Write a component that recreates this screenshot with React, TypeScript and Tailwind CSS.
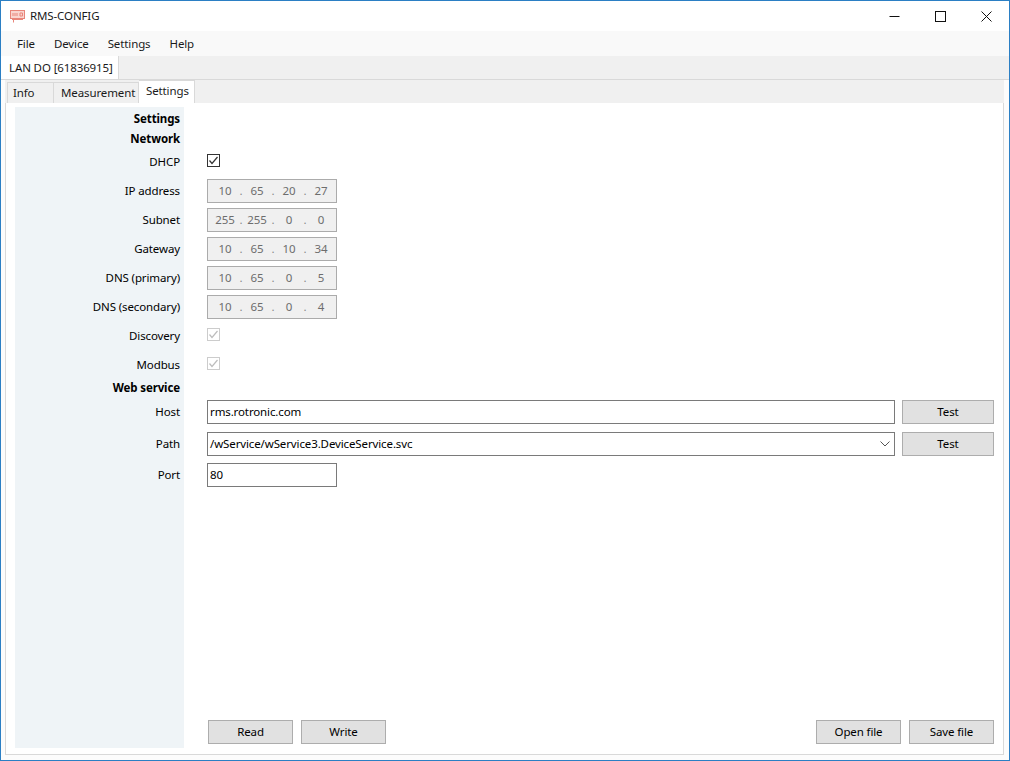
const ipRows = [
  { label: "IP address", parts: ["10", "65", "20", "27"] },
  { label: "Subnet", parts: ["255", "255", "0", "0"] },
  { label: "Gateway", parts: ["10", "65", "10", "34"] },
  { label: "DNS (primary)", parts: ["10", "65", "0", "5"] },
  { label: "DNS (secondary)", parts: ["10", "65", "0", "4"] },
]

function Check({ disabled = false, lift }: { disabled?: boolean; lift: string }) {
  return (
    <svg width="13" height="13" viewBox="0 0 13 13" className={`block ${lift}`}>
      <rect x="0.5" y="0.5" width="12" height="12" fill="#fff" stroke={disabled ? "#cccccc" : "#333333"} />
      <path d="M2.5 6.5 L5 9.5 L10.5 3" fill="none" stroke={disabled ? "#bdbdbd" : "#333333"} strokeWidth="1.2" />
    </svg>
  )
}

function Row({ label, bold, h, children }: { label: string; bold?: boolean; h: string; children?: React.ReactNode }) {
  return (
    <div className={`flex items-center ${h}`}>
      <div className={`w-[169px] h-full bg-[#eff4f7] flex items-center justify-end pr-[4px] text-black ${bold ? "font-bold" : ""}`}>
        {label}
      </div>
      <div className="flex-1 pl-[23px] pr-[8px] flex items-center gap-[7px]">{children}</div>
    </div>
  )
}

function Btn({ children, w }: { children: string; w: string }) {
  return (
    <div className={`${w} h-[24px] bg-[#e1e1e1] border border-[#adadad] flex items-center justify-center text-black`}>
      {children}
    </div>
  )
}

function IpBox({ parts }: { parts: string[] }) {
  return (
    <div className="w-[130px] h-[24px] bg-[#f0f0f0] border border-[#ababab] pl-[4px] grid grid-cols-[26px_6px_26px_6px_26px_6px_26px] items-center text-[#6d6d6d]">
      {parts.map((p, i) => (
        <div key={i} className="contents">
          <span className="text-center">{p}</span>
          {i < 3 && <span className="text-center text-[#8a8a8a]">.</span>}
        </div>
      ))}
    </div>
  )
}

export default function App() {
  return (
    <div className="w-[1010px] h-[761px] bg-white border border-[#2b7fc4] flex flex-col overflow-hidden text-[11.5px] tracking-[-0.12px] text-[#1a1a1a] font-['Noto_Sans','Open_Sans',sans-serif]">
      <div className="h-[30px] flex items-center shrink-0">
        <svg width="15" height="13" viewBox="0 0 15 13" className="ml-[9px] mr-[5px]" fill="none" stroke="#e8857a">
          <rect x="0.5" y="0.5" width="14" height="8" fill="#f9d5d0" />
          <path d="M3 3v3M5 3v3M7 3v3M10 3h2.5v3H10z" />
          <path d="M2 9.5h11M3.5 10v2.5" />
        </svg>
        <span>RMS-CONFIG</span>
        <div className="ml-auto flex items-center">
          <svg width="11" height="11" viewBox="0 0 11 11" className="mr-[35px]" stroke="#111" fill="none">
            <path d="M0.5 5.5h10" />
          </svg>
          <svg width="11" height="11" viewBox="0 0 11 11" className="mr-[35px]" stroke="#111" fill="none">
            <rect x="0.5" y="0.5" width="10" height="10" />
          </svg>
          <svg width="11" height="11" viewBox="0 0 11 11" className="mr-[17px]" stroke="#111" fill="none">
            <path d="M0.5 0.5l10 10M10.5 0.5l-10 10" />
          </svg>
        </div>
      </div>

      <div className="h-[25px] bg-[#f9f9f9] flex items-center pl-[16px] gap-[19px] shrink-0">
        <span>File</span>
        <span>Device</span>
        <span>Settings</span>
        <span>Help</span>
      </div>

      <div className="h-[23px] bg-[#f0f0f0] shrink-0 flex items-end">
        <div className="w-[118px] h-[23px] bg-white border-r border-[#d9d9d9] pl-[8px] flex items-center whitespace-nowrap">LAN DO [61836915]</div>
      </div>

      <div className="flex-1 min-h-0 border-t border-[#d9d9d9] pl-[4px] pr-[5px] pb-[5px] flex flex-col bg-[#fcfcfc]">
        <div className="h-[23px] bg-[#f0f0f0] flex items-end shrink-0 pl-[2px]">
          <div className="w-[47px] h-[21px] border border-b-0 border-[#d9d9d9] flex items-center pl-[5px]">Info</div>
          <div className="w-[85px] h-[21px] border-r border-t border-[#d9d9d9] flex items-center pl-[7px] whitespace-nowrap">Measurement</div>
          <div className="w-[56px] h-[23px] bg-white border-r border-t border-[#d9d9d9] flex items-center pl-[7px] pb-[2px]">Settings</div>
        </div>
        <div className="flex-1 min-h-0 bg-white border border-t-0 border-[#d9d9d9] pl-[9px] pt-[4px] pb-[6px] flex flex-col">
          <Row label="Settings" bold h="h-[23px]" />
          <Row label="Network" bold h="h-[18px]" />
          <Row label="DHCP" h="h-[28px]">
            <Check lift="mb-[3px]" />
          </Row>
          {ipRows.map((r) => (
            <Row key={r.label} label={r.label} h="h-[29px]">
              <IpBox parts={r.parts} />
            </Row>
          ))}
          <Row label="Discovery" h="h-[29px]">
            <Check disabled lift="mb-[2px]" />
          </Row>
          <Row label="Modbus" h="h-[29px]">
            <Check disabled lift="mb-[2px]" />
          </Row>
          <Row label="Web service" bold h="h-[18px]" />
          <Row label="Host" h="h-[30px]">
            <div className="w-[688px] h-[24px] border border-[#7a7a7a] pl-[2px] flex items-center text-black">rms.rotronic.com</div>
            <Btn w="w-[92px]">Test</Btn>
          </Row>
          <Row label="Path" h="h-[33px]">
            <div className="w-[688px] h-[24px] border border-[#7a7a7a] pl-[2px] pr-[4px] flex items-center justify-between text-black">
              /wService/wService3.DeviceService.svc
              <svg width="10" height="6" viewBox="0 0 10 6" fill="none" stroke="#555">
                <path d="M0.5 0.5L5 5L9.5 0.5" />
              </svg>
            </div>
            <Btn w="w-[92px]">Test</Btn>
          </Row>
          <Row label="Port" h="h-[29px]">
            <div className="w-[130px] h-[24px] border border-[#7a7a7a] pl-[2px] flex items-center text-black">80</div>
          </Row>
          <div className="flex-1 min-h-0 flex">
            <div className="w-[169px] bg-[#eff4f7]" />
            <div className="flex-1 flex items-end pl-[24px] pr-[9px] pb-[4px] gap-[8px]">
              <Btn w="w-[85px]">Read</Btn>
              <Btn w="w-[85px]">Write</Btn>
              <div className="ml-auto flex gap-[8px]">
                <Btn w="w-[85px]">Open file</Btn>
                <Btn w="w-[85px]">Save file</Btn>
              </div>
            </div>
          </div>
        </div>
      </div>
    </div>
  )
}
